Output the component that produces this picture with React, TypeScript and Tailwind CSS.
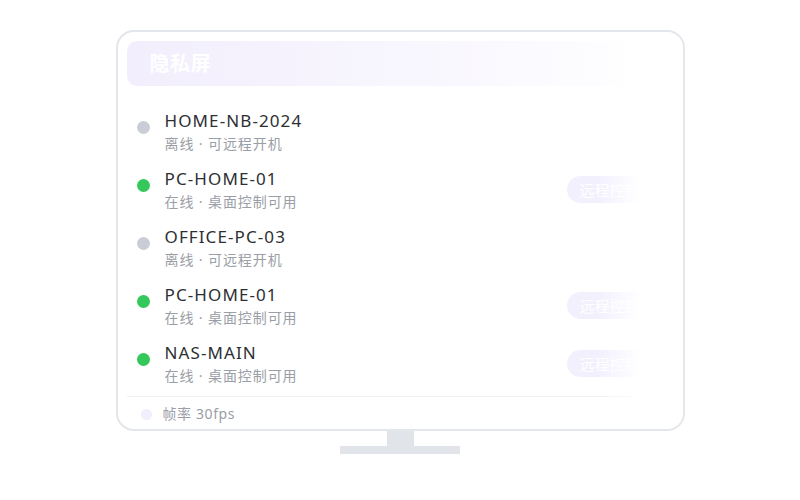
import React from "react";

type Device = {
    name: string;
    online: boolean;
};

const devices: Device[] = [
    { name: "HOME-NB-2024", online: false },
    { name: "PC-HOME-01", online: true },
    { name: "OFFICE-PC-03", online: false },
    { name: "PC-HOME-01", online: true },
    { name: "NAS-MAIN", online: true },
];

const font = { fontFamily: '"Noto Sans", "Noto Sans CJK SC", sans-serif' };

const DeviceRow = ({ device }: { device: Device }) => (
    <div className="flex items-center pl-[10px] pr-[22px]">
        <span
            className={
                "self-start mt-[11px] w-[13px] h-[13px] rounded-full shrink-0 " +
                (device.online ? "bg-[#34c759]" : "bg-[#cbcdd6]")
            }
        />
        <div className="ml-[15px] flex flex-col">
            <span className="text-[17px] leading-[22px] tracking-[1.1px] text-[#2d2f33]">{device.name}</span>
            <span className="mt-[3px] text-[14px] leading-[18px] tracking-[0.9px] text-[#9a9ea6]">
                {device.online ? "在线 · 桌面控制可用" : "离线 · 可远程开机"}
            </span>
        </div>
        {device.online && (
            <button
                className="ml-auto h-[27px] px-[12px] rounded-full bg-[#f3f0fe] text-white text-[15px] leading-[27px]"
                style={{ fontFamily: '"Noto Sans CJK SC", serif' }}
            >
                远程控制
            </button>
        )}
    </div>
);

export default function App() {
    return (
        <div className="w-[800px] h-[500px] bg-white flex flex-col items-center pt-[30px]" style={font}>
            <div className="relative w-[569px] h-[401px] border-2 border-[#e3e6ea] rounded-[18px] bg-white p-[9px] flex flex-col overflow-hidden">
                <div className="h-[45px] shrink-0 rounded-[10px] bg-gradient-to-r from-[#f2eefd] via-[#f8f6fe] to-white flex items-center pl-[23px]">
                    <span className="text-[20px] font-bold text-white tracking-[0.5px]">隐私屏</span>
                </div>

                <div className="mt-[24px] flex flex-col gap-[15px]">
                    {devices.map((d, i) => (
                        <DeviceRow key={i} device={d} />
                    ))}
                </div>

                <div className="mt-[11px] border-t border-[#eef0f3] flex items-center pl-[14px] pt-[8px]">
                    <span className="w-[11px] h-[11px] rounded-full bg-[#f1eefd]" />
                    <span className="ml-[11px] text-[14px] leading-[18px] tracking-[0.6px] text-[#9a9ea6]">帧率 30fps</span>
                </div>

                <div className="pointer-events-none absolute top-0 bottom-0 right-0 w-[85px] bg-gradient-to-r from-transparent via-white to-white" />
            </div>
            <div className="w-[27px] h-[15px] bg-[#e1e5e9]" />
            <div className="w-[120px] h-[8px] bg-[#e1e5e9]" />
        </div>
    );
}
